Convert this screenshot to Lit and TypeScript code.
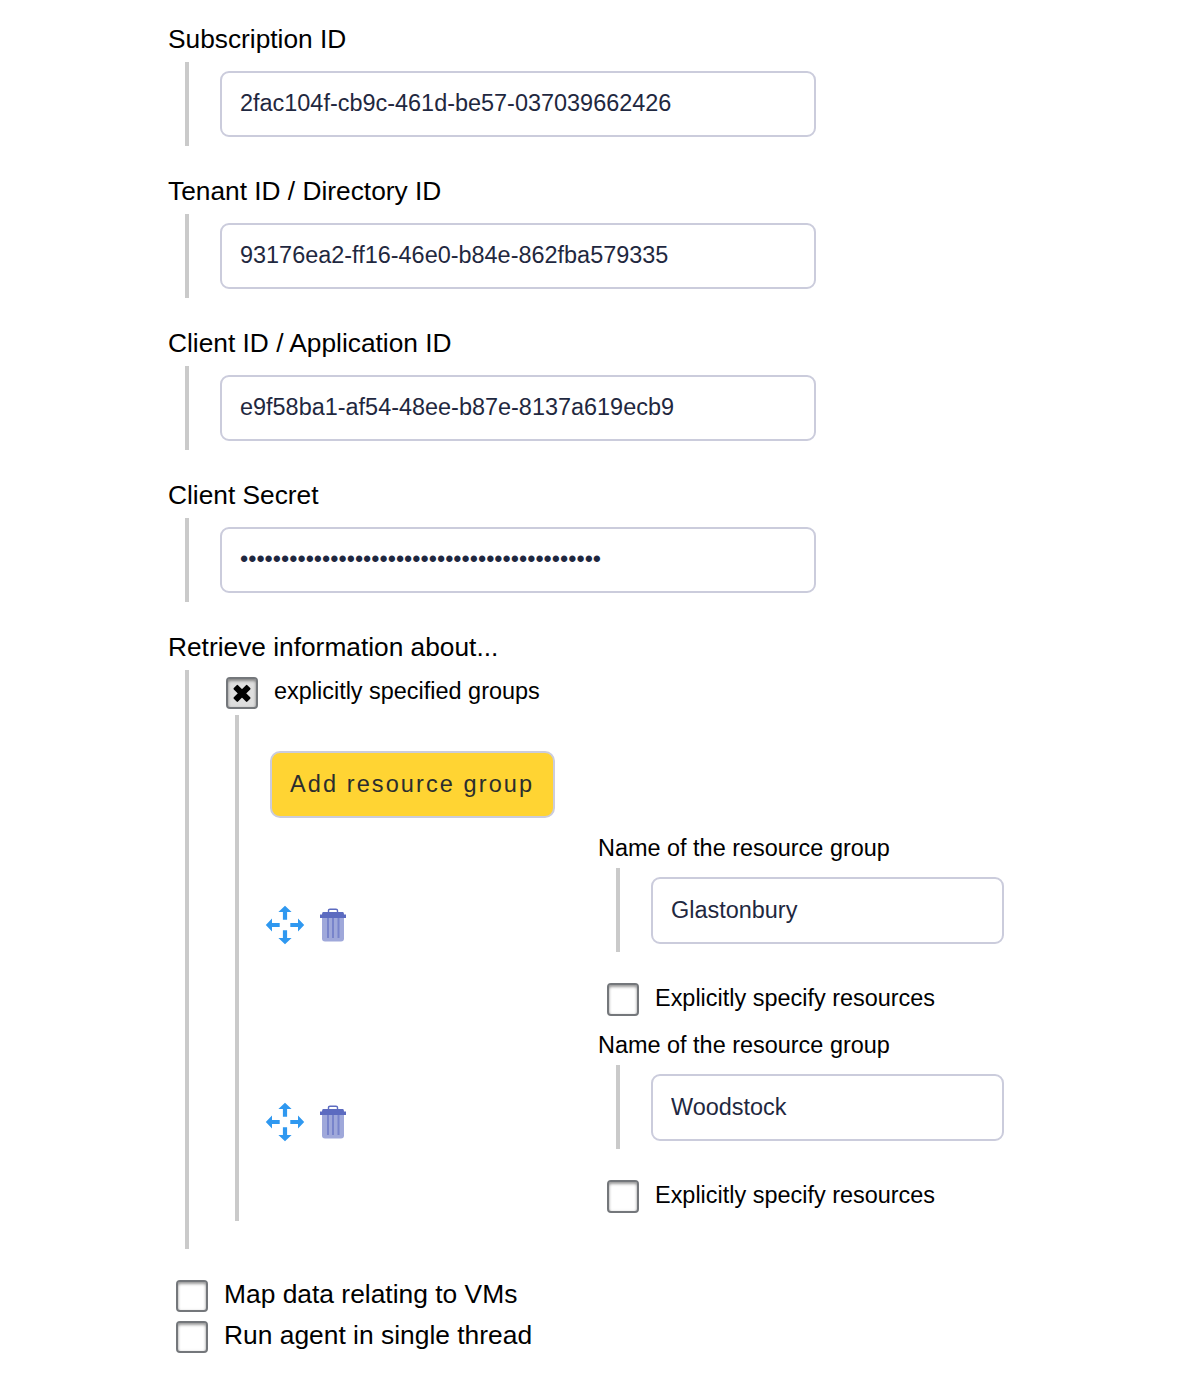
import { LitElement, html, css, svg } from "lit";
import { customElement, property } from "lit/decorators.js";

const textFont = css`"Liberation Sans", Arial, sans-serif`;

@customElement("check-box")
class CheckBox extends LitElement {
  @property({ type: Boolean }) checked = false;

  static styles = css`
    :host { display: block; flex: none; width: 32px; height: 32px; }
    .box {
      box-sizing: border-box;
      width: 100%;
      height: 100%;
      border: 2px solid #74777b;
      border-radius: 4px;
      background: #fff;
      box-shadow: inset 0 2px 3px rgba(0, 0, 0, 0.38), inset 0 0 3px rgba(0, 0, 0, 0.1);
    }
    .on { background: #dedede; }
    .mark { display: block; width: 28px; height: 28px; }
  `;

  render() {
    return html`<div class="box ${this.checked ? "on" : ""}" role="checkbox" aria-checked=${this.checked}>
      ${this.checked
        ? html`<svg class="mark" viewBox="0 0 28 28">
            ${[45, -45].map(
              (a) => svg`<rect x="4.4" y="11.4" width="19.2" height="6" rx="1" transform="rotate(${a} 14 14.4)"/>`
            )}
          </svg>`
        : null}
    </div>`;
  }
}

@customElement("text-field")
class TextField extends LitElement {
  @property() label = "";
  @property() value = "";
  @property() type = "text";
  @property({ type: Boolean }) compact = false;

  static styles = css`
    :host { display: block; font-family: ${textFont}; }
    .label {
      height: 46px;
      line-height: 46px;
      font-size: 26.3px;
      color: #000;
      white-space: nowrap;
    }
    .body {
      box-sizing: border-box;
      height: 84px;
      margin-left: 17px;
      padding: 9px 0 0 31px;
      border-left: 4px solid #cacaca;
    }
    .input {
      box-sizing: border-box;
      display: block;
      width: 596px;
      height: 66px;
      margin: 0;
      padding: 0 18px 2px;
      border: 2px solid #cbccdc;
      border-radius: 9px;
      outline: none;
      background: #fff;
      color: #1f2840;
      font-family: ${textFont};
      font-size: 23.44px;
    }
    .compact .label { height: 42px; line-height: 45px; font-size: 23.45px; }
    .compact .body { margin-left: 18px; }
    .compact .input { width: 353px; height: 67px; padding-bottom: 0; }
  `;

  render() {
    return html`<div class=${this.compact ? "compact" : ""}>
      <div class="label">${this.label}</div>
      <div class="body">
        <input class="input" type=${this.type} .value=${this.value} aria-label=${this.label} />
      </div>
    </div>`;
  }
}

@customElement("app-root")
class AppRoot extends LitElement {
  static styles = css`
    :host { display: block; background: #fff; font-family: ${textFont}; color: #000; }
    .page { box-sizing: border-box; height: 1380px; padding: 16px 0 0 168px; overflow: hidden; }
    .field { margin-bottom: 22px; }
    .heading { height: 46px; line-height: 46px; font-size: 26.3px; }
    .section {
      box-sizing: border-box;
      height: 579px;
      margin-left: 17px;
      padding: 7px 0 0 37px;
      border-left: 4px solid #cacaca;
    }
    .option { display: flex; gap: 16px; font-size: 23.45px; line-height: 29px; white-space: nowrap; }
    .groups {
      box-sizing: border-box;
      height: 506px;
      margin: 6px 0 0 9px;
      padding: 36px 0 0 31px;
      border-left: 4px solid #cacaca;
    }
    .add {
      box-sizing: border-box;
      display: block;
      width: 285px;
      height: 67px;
      margin: 0 0 8px;
      padding: 0 0 0 18px;
      border: 2px solid #cbccdc;
      border-radius: 10px;
      background: #ffd433;
      color: #2b2d2e;
      font-family: ${textFont};
      font-size: 23.5px;
      letter-spacing: 2.1px;
      text-align: left;
      white-space: nowrap;
    }
    .row { display: flex; height: 197px; }
    .tools { display: flex; align-items: center; gap: 15px; width: 333px; margin-left: -5px; }
    .move { width: 40px; height: 40px; flex: none; }
    .trash { width: 26px; height: 34px; flex: none; }
    .details .option { margin: 31px 0 0 9px; line-height: 31px; }
    .details check-box { height: 33px; }
    .bottom { display: flex; flex-direction: column; gap: 9px; margin: 31px 0 0 8px; }
    .bottom .option { font-size: 26.4px; line-height: 28px; }
  `;

  fields = [
    { label: "Subscription ID", value: "2fac104f-cb9c-461d-be57-037039662426", type: "text" },
    { label: "Tenant ID / Directory ID", value: "93176ea2-ff16-46e0-b84e-862fba579335", type: "text" },
    { label: "Client ID / Application ID", value: "e9f58ba1-af54-48ee-b87e-8137a619ecb9", type: "text" },
    { label: "Client Secret", value: "•".repeat(44), type: "password" },
  ];

  groups = ["Glastonbury", "Woodstock"];

  moveIcon() {
    const arrow = "M20 0.8 L26.6 7 H22.1 V14.7 H17.9 V7 H13.4 Z";
    return html`<svg class="move" viewBox="0 0 40 40" fill="#2f98f0">
      ${[0, 90, 180, 270].map((a) => svg`<path d=${arrow} transform="rotate(${a} 20 20)"/>`)}
    </svg>`;
  }

  trashIcon() {
    return html`<svg class="trash" viewBox="0 0 26 34">
      <path d="M2 7 H24 V30.5 Q24 33.5 21 33.5 H5 Q2 33.5 2 30.5 Z" fill="#9fa8da" />
      <path d="M7 10 H9 V30 H7 Z M12 10 H14 V30 H12 Z M17.5 10 H19.5 V30 H17.5 Z" fill="#7884cb" />
      <path d="M8.5 5 V2.6 Q8.5 1.2 10 1.2 H16 Q17.5 1.2 17.5 2.6 V5" fill="none" stroke="#5c6bc0" stroke-width="1.4" />
      <path d="M3 4 H23 Q24 4 24 6.5 H26 V10 H0 V6.5 H2 Q2 4 3 4 Z" fill="#5c6bc0" />
    </svg>`;
  }

  render() {
    return html`<main class="page">
      ${this.fields.map(
        (f) => html`<text-field class="field" .label=${f.label} .value=${f.value} .type=${f.type}></text-field>`
      )}
      <div class="heading">Retrieve information about...</div>
      <section class="section">
        <div class="option"><check-box checked></check-box><span>explicitly specified groups</span></div>
        <div class="groups">
          <button class="add">Add resource group</button>
          ${this.groups.map(
            (name) => html`<div class="row">
              <div class="tools">${this.moveIcon()}${this.trashIcon()}</div>
              <div class="details">
                <text-field compact .label=${"Name of the resource group"} .value=${name}></text-field>
                <div class="option"><check-box></check-box><span>Explicitly specify resources</span></div>
              </div>
            </div>`
          )}
        </div>
      </section>
      <div class="bottom">
        <div class="option"><check-box></check-box><span>Map data relating to VMs</span></div>
        <div class="option"><check-box></check-box><span>Run agent in single thread</span></div>
      </div>
    </main>`;
  }
}
